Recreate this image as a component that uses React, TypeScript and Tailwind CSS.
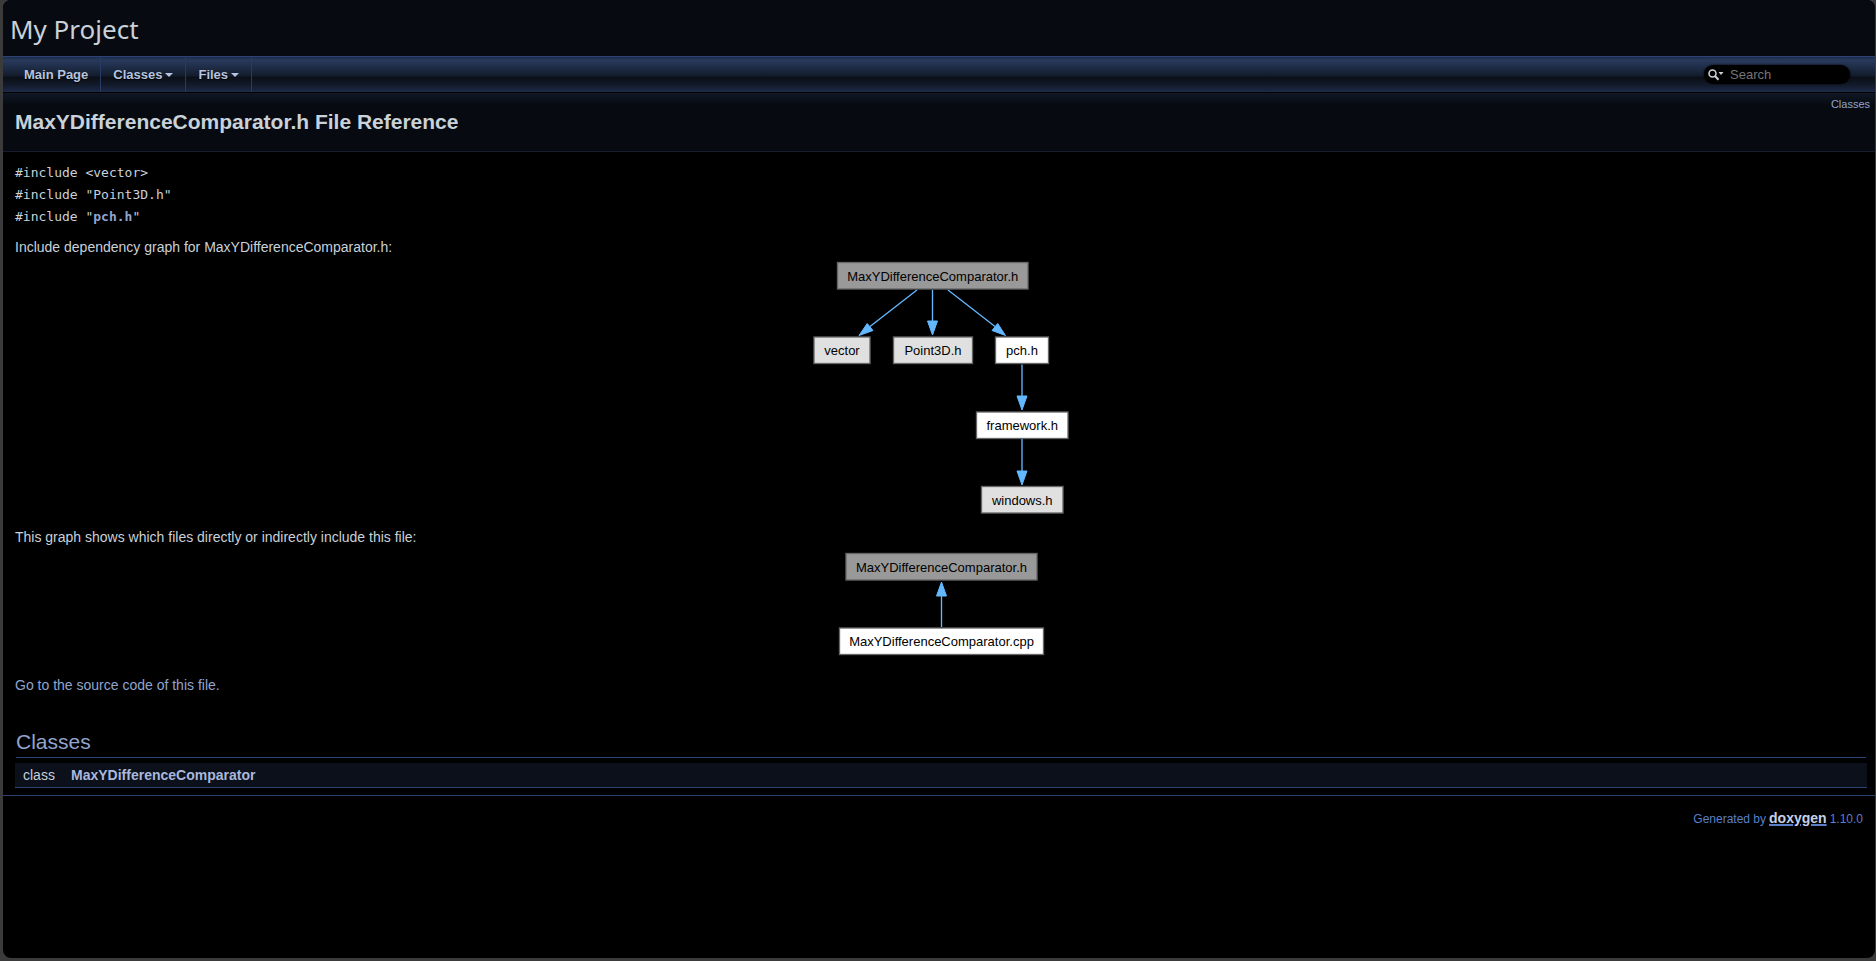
import React from "react";

type NodeProps = { x: number; y: number; w: number; h: number; label: string; fill: string };

function GraphNode({ x, y, w, h, label, fill }: NodeProps) {
  return (
    <g>
      <rect x={x} y={y} width={w} height={h} fill={fill} stroke="#666666" strokeWidth="1.33" />
      <text x={x + w / 2} y={y + 18} textAnchor="middle" fontSize="13" fill="#000000">
        {label}
      </text>
    </g>
  );
}

function Edge({ d, head }: { d: string; head: string }) {
  return (
    <g stroke="#63b8ff" strokeWidth="1.33">
      <path d={d} fill="none" />
      <polygon points={head} fill="#63b8ff" strokeWidth="1" />
    </g>
  );
}

function IncludeGraph() {
  return (
    <svg
      className="mx-auto block font-['Liberation_Sans',Arial,sans-serif]"
      width="263"
      height="262"
      viewBox="810 259 263 262"
      role="img"
      aria-label="Include dependency graph"
    >
      <Edge d="M917 291 L870 327.500" head="867.2,324.5 859,336.500 873,331.500" />
      <Edge d="M932.5 291 V322" head="927.5,322 932.5,336 937.5,322" />
      <Edge d="M948 291 L995 327.500" head="997.7,324.5 1005.500,336.500 992,331.500" />
      <Edge d="M1022 365.500 V397" head="1017,397 1022,411 1027,397" />
      <Edge d="M1022 440 V472" head="1017,472 1022,486 1027,472" />
      <GraphNode x={837.5} y={263.5} w={190.5} h={26.5} label="MaxYDifferenceComparator.h" fill="#999999" />
      <GraphNode x={814} y={338} w={56} h={26.5} label="vector" fill="#e0e0e0" />
      <GraphNode x={893.5} y={338} w={79} h={26.5} label="Point3D.h" fill="#e0e0e0" />
      <GraphNode x={995.5} y={338} w={53} h={26.5} label="pch.h" fill="#ffffff" />
      <GraphNode x={976.5} y={413} w={91.5} h={26.5} label="framework.h" fill="#ffffff" />
      <GraphNode x={981.5} y={487.5} w={81.5} h={26.5} label="windows.h" fill="#e0e0e0" />
    </svg>
  );
}

function IncludedByGraph() {
  return (
    <svg
      className="mx-auto block font-['Liberation_Sans',Arial,sans-serif]"
      width="211"
      height="112"
      viewBox="836 549 211 112"
      role="img"
      aria-label="Files that include this file"
    >
      <Edge d="M941.5 628 V597" head="936.5,597 941.5,583 946.5,597" />
      <GraphNode x={846} y={554.5} w={191} h={26.5} label="MaxYDifferenceComparator.h" fill="#999999" />
      <GraphNode x={839.5} y={629} w={204} h={26.5} label="MaxYDifferenceComparator.cpp" fill="#ffffff" />
    </svg>
  );
}

function NavItem({ label, menu }: { label: string; menu?: boolean }) {
  return (
    <li className="flex border-r border-[#263a63]">
      <a
        href="#"
        className="flex h-[35px] items-center gap-[3px] px-3 text-[13px] font-bold text-[#b6c4df] [text-shadow:0_1px_1px_#000]"
      >
        {label}
        {menu && <span className="border-x-4 border-t-4 border-x-transparent border-t-[#b6c4df]" />}
      </a>
    </li>
  );
}

export default function App() {
  return (
    <div className="flex min-h-screen bg-[#3b3b3b] pr-px pb-[3px] pl-[3px] font-['Liberation_Sans',Arial,sans-serif] text-sm leading-[22px] text-[#c9d1d9]">
      <div className="flex-1 overflow-hidden rounded-lg bg-black">
        <header className="flex h-14 items-center bg-[#070b11] px-[7px] pt-[2px]">
          <div className="font-['Noto_Sans',sans-serif] text-[26px] leading-8">My Project</div>
        </header>

        <nav className="flex h-[37px] items-center justify-between border-t border-b border-t-[#2d4373] border-b-black bg-[linear-gradient(to_bottom,#1b2a48_0px,#283a5d_3px,#131c2c_19px,#0b0f16_20px,#101724_26px,#1c2a48_35px)] pr-[25px] pl-[9px]">
          <ul className="flex">
            <NavItem label="Main Page" />
            <NavItem label="Classes" menu />
            <NavItem label="Files" menu />
          </ul>
          <div className="flex h-[19px] w-[146px] items-center gap-[6px] rounded-full bg-black px-1 shadow-[0_0_2px_#000]">
            <svg className="shrink-0" width="16" height="12" viewBox="0 0 16 12" aria-hidden="true">
              <circle cx="4.500" cy="4.500" r="3.500" fill="none" stroke="#c9d1d9" strokeWidth="1.600" />
              <path d="M7 7 L10.500 10.700" stroke="#c9d1d9" strokeWidth="2" />
              <path d="M10.500 3 h5 l-2.500 3 z" fill="#c9d1d9" />
            </svg>
            <input
              type="text"
              aria-label="Search"
              placeholder="Search"
              className="w-full min-w-0 bg-transparent text-[13px] leading-4 outline-none placeholder:text-[#757575]"
            />
          </div>
        </nav>

        <div className="flex h-[59px] items-start justify-between border-b border-[#141c2e] bg-[linear-gradient(to_bottom,#101826_0px,#070b11_12px,#070b11_100%)] pr-[5px] pl-3">
          <h1 className="pt-[15px] text-[21px] leading-7 font-bold">MaxYDifferenceComparator.h File Reference</h1>
          <a href="#classes" className="pt-[3px] text-[11px] leading-4 text-[#90a5ce]">Classes</a>
        </div>

        <main className="pr-2 pl-3">
          <div className="pt-[10px] font-['DejaVu_Sans_Mono',monospace] text-[13px]">
            <div>#include &lt;vector&gt;</div>
            <div>#include "Point3D.h"</div>
            <div>#include "<a href="#" className="font-bold text-[#90a5ce]">pch.h</a>"</div>
          </div>
          <p className="pt-2">Include dependency graph for MaxYDifferenceComparator.h:</p>
          <IncludeGraph />
          <p className="pt-[6px]">This graph shows which files directly or indirectly include this file:</p>
          <IncludedByGraph />
          <p className="pt-[14px]">
            <a href="#" className="text-[#90a5ce]">Go to the source code of this file.</a>
          </p>

          <section id="classes" className="pt-[30px]">
            <h2 className="mx-px border-b border-[#2d4373] text-[21px] leading-[31px] text-[#90a5ce]">Classes</h2>
            <table className="mt-[5px] w-full border-collapse">
              <tbody>
                <tr className="border-b border-[#2d4373] bg-[#0b101a]">
                  <td className="w-12 py-px pl-2">class</td>
                  <td className="py-px pl-2 font-bold">
                    <a href="#" className="text-[#a9b8dd]">MaxYDifferenceComparator</a>
                  </td>
                </tr>
              </tbody>
            </table>
          </section>
        </main>

        <footer className="mt-[7px] flex items-baseline justify-end gap-[3px] border-t border-[#2d4373] pt-[11px] pr-3 text-xs leading-[22px] text-[#5b7fc7]">
          <span>Generated by</span>
          <a href="#" className="text-sm leading-[22px] font-bold text-[#c5d0e8] underline decoration-[#5b7fc7] decoration-2">doxygen</a>
          <span>1.10.0</span>
        </footer>
      </div>
    </div>
  );
}
